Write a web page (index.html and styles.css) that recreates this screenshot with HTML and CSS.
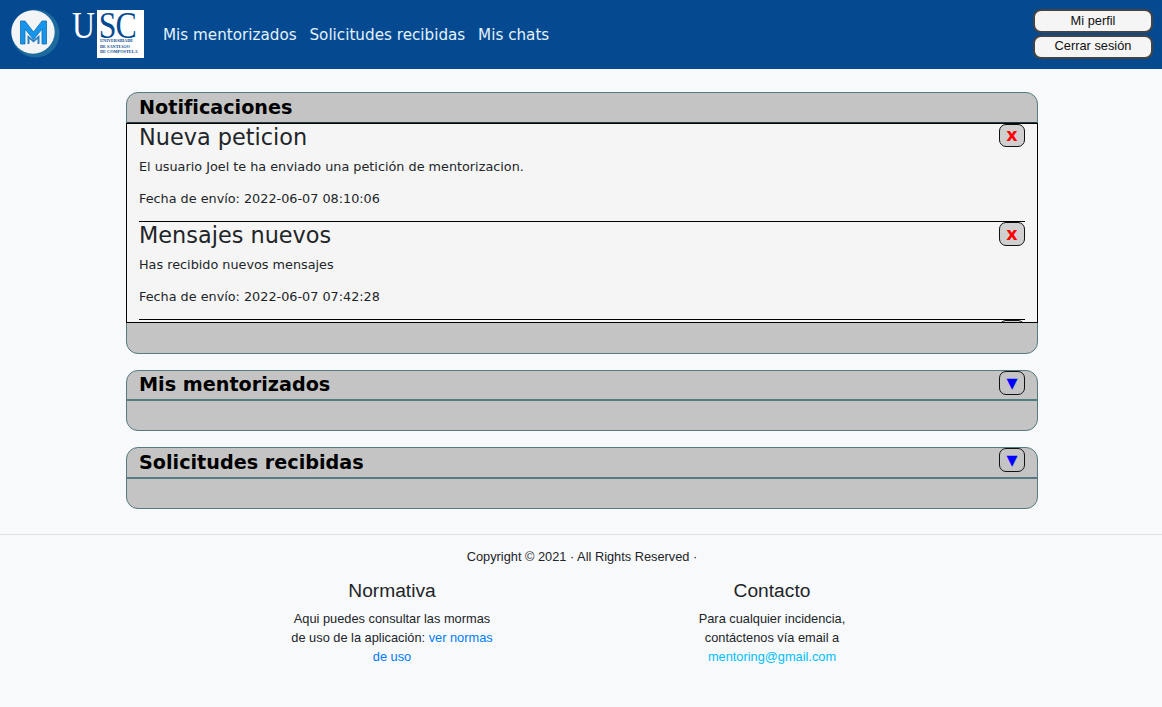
FILE: index.html
```html
<!DOCTYPE html>
<html lang="es">
<head>
<meta charset="utf-8">
<title>Mentoring</title>
<link rel="stylesheet" href="styles.css">
</head>
<body>
<header class="topbar">
  <svg class="logo-m" width="50" height="50" viewBox="0 0 50 50">
    <circle cx="25.500" cy="24.500" r="24" fill="#1c6a9e"/>
    <circle cx="23" cy="23" r="21.700" fill="#f2f4f5"/>
    <path d="M10.500 35V12h4.500l8.500 11 8.500-11h4.500v23h-4.500V20l-8.500 10.500L15 20v15z" fill="#1795ec" stroke="#0f6fb5" stroke-width=".8"/>
    <path d="M17.500 35v-9l6 5 6-5v9h-2v-5l-4 3.500-4-3.500v5z" fill="#2a7fc0"/>
  </svg>
  <div class="logo-usc">
    <span class="logo-u">U</span>
    <div class="logo-box">
      <span class="logo-sc">SC</span>
      <span class="logo-sub">UNIVERSIDADE<br>DE SANTIAGO<br>DE COMPOSTELA</span>
    </div>
  </div>
  <nav class="nav">
    <a href="#">Mis mentorizados</a>
    <a href="#">Solicitudes recibidas</a>
    <a href="#">Mis chats</a>
  </nav>
  <div class="account">
    <button class="account-btn">Mi perfil</button>
    <button class="account-btn">Cerrar sesión</button>
  </div>
</header>

<main class="main">
  <section class="panel">
    <div class="panel-head panel-head-open"><h2>Notificaciones</h2></div>
    <div class="panel-body">
      <article class="note">
        <button class="square-btn close">x</button>
        <h3>Nueva peticion</h3>
        <p>El usuario Joel te ha enviado una petición de mentorizacion.</p>
        <p>Fecha de envío: 2022-06-07 08:10:06</p>
      </article>
      <article class="note">
        <button class="square-btn close">x</button>
        <h3>Mensajes nuevos</h3>
        <p>Has recibido nuevos mensajes</p>
        <p>Fecha de envío: 2022-06-07 07:42:28</p>
      </article>
      <article class="note">
        <button class="square-btn close">x</button>
        <h3>Mensajes nuevos</h3>
      </article>
    </div>
    <div class="panel-foot"></div>
  </section>

  <section class="panel">
    <div class="panel-head"><h2>Mis mentorizados</h2><button class="square-btn toggle">▼</button></div>
    <div class="panel-foot"></div>
  </section>

  <section class="panel">
    <div class="panel-head"><h2>Solicitudes recibidas</h2><button class="square-btn toggle">▼</button></div>
    <div class="panel-foot"></div>
  </section>
</main>

<footer class="footer">
  <p class="copy">Copyright © 2021 · All Rights Reserved ·</p>
  <div class="footer-cols">
    <div class="footer-col col-a">
      <h4>Normativa</h4>
      <p>Aqui puedes consultar las mormas<br>de uso de la aplicación: <a class="link-blue" href="#">ver normas<br>de uso</a></p>
    </div>
    <div class="footer-col col-b">
      <h4>Contacto</h4>
      <p>Para cualquier incidencia,<br>contáctenos vía email a<br><a class="link-cyan" href="#">mentoring@gmail.com</a></p>
    </div>
  </div>
</footer>
</body>
</html>
```
FILE: styles.css
```css
* { box-sizing: border-box; }
html, body { margin: 0; height: 707px; overflow: hidden; }
body { background: #f8f9fa; color: #212529; font-family: "DejaVu Sans", sans-serif; }

.topbar { height: 69px; background: #054a91; display: flex; align-items: flex-start; position: relative; }
.logo-m { margin: 9px 0 0 10px; flex: none; }
.logo-usc { display: flex; margin: 10px 0 0 12px; height: 48px; flex: none; }
.logo-u { width: 25px; color: #fff; font: 37px/32px "Liberation Serif", serif; transform: scaleX(.86); transform-origin: left; }
.logo-box { width: 47px; height: 48px; background: #fff; color: #054a91; display: flex; flex-direction: column; }
.logo-sc { font: 37px/32px "Liberation Serif", serif; letter-spacing: -1px; padding-left: 2px; height: 28px; white-space: nowrap; transform: scaleX(.86); transform-origin: left; }
.logo-sub { font: bold 4.300px/5.500px "Liberation Serif", serif; padding-left: 3px; white-space: nowrap; }
.nav { display: flex; gap: 12.800px; margin: 25px 0 0 19px; font-size: 15.200px; line-height: 21px; }
.nav a { color: #e3f2fd; text-decoration: none; }
.account { margin: 9px 9px 0 auto; width: 120px; display: flex; flex-direction: column; gap: 2px; }
.account-btn { height: 24px; padding: 0 0 2px; background: #f5f5f5; border: 2px solid #444; border-radius: 8px; color: #111; font: 12.800px "Liberation Sans", sans-serif; }
.account-btn + .account-btn { padding-bottom: 4px; }

.main { width: 912px; margin: 22.800px 0 0 126px; display: flex; flex-direction: column; gap: 16px; }
.panel { background: #c4c4c4; border: 1px solid #557a82; border-radius: 12px; }
.panel-head { height: 30.500px; display: flex; justify-content: space-between; padding: 0 12px; border-bottom: 2px solid #557a82; }
.panel-head-open { height: 30px; border-bottom: 1px solid #1f3c44; }
.panel-head h2 { margin: 0; padding-top: .4px; font-size: 19.200px; line-height: 28px; font-weight: bold; color: #000; }
.panel-head-open h2 { padding-top: 0; line-height: 29px; }
.panel-foot { height: 29px; }
.panel-head-open ~ .panel-foot { height: 30px; }

.panel-body { height: 200px; overflow: hidden; background: #f5f5f5; border: 1px solid #000; padding: 0 12px; margin: 0 -1px; }
.note { height: 98px; border-bottom: 1px solid #000; position: relative; }
.note h3 { margin: 0; font-size: 22.400px; line-height: 26px; font-weight: 400; color: #212529; }
.note p { margin: 0 0 16px; font-size: 12.800px; line-height: 16px; }
.note h3 + p { margin-top: 9px; }
.square-btn { width: 26px; height: 24px; padding: 0; border: 1px solid #111; border-radius: 7px; font-family: "DejaVu Sans", sans-serif; font-weight: bold; }
.close { position: absolute; top: 0; right: 0; background: #d0d0d0; color: #f00; font-size: 17.600px; line-height: 20px; }
.note:first-child .close { height: 23px; }
.toggle { background: #c4c4c4; color: #00f; font-size: 14.400px; line-height: 20px; }

.footer { margin-top: 25.200px; border-top: 1px solid #dee2e6; font-family: "Liberation Sans", sans-serif; font-size: 12.800px; line-height: 19px; text-align: center; }
.copy { margin: 12px 0 0; padding-left: 2px; }
.footer-cols { display: flex; margin-top: 13px; }
.footer-col h4 { margin: 0; font-size: 19.200px; line-height: 23px; font-weight: 400; }
.footer-col p { margin: 7px 0 0; }
.col-a { width: 210px; margin-left: 287px; }
.col-b { width: 200px; margin-left: 175px; }
.link-blue { color: #007bff; text-decoration: none; }
.link-cyan { color: #00bfff; text-decoration: none; }
```
